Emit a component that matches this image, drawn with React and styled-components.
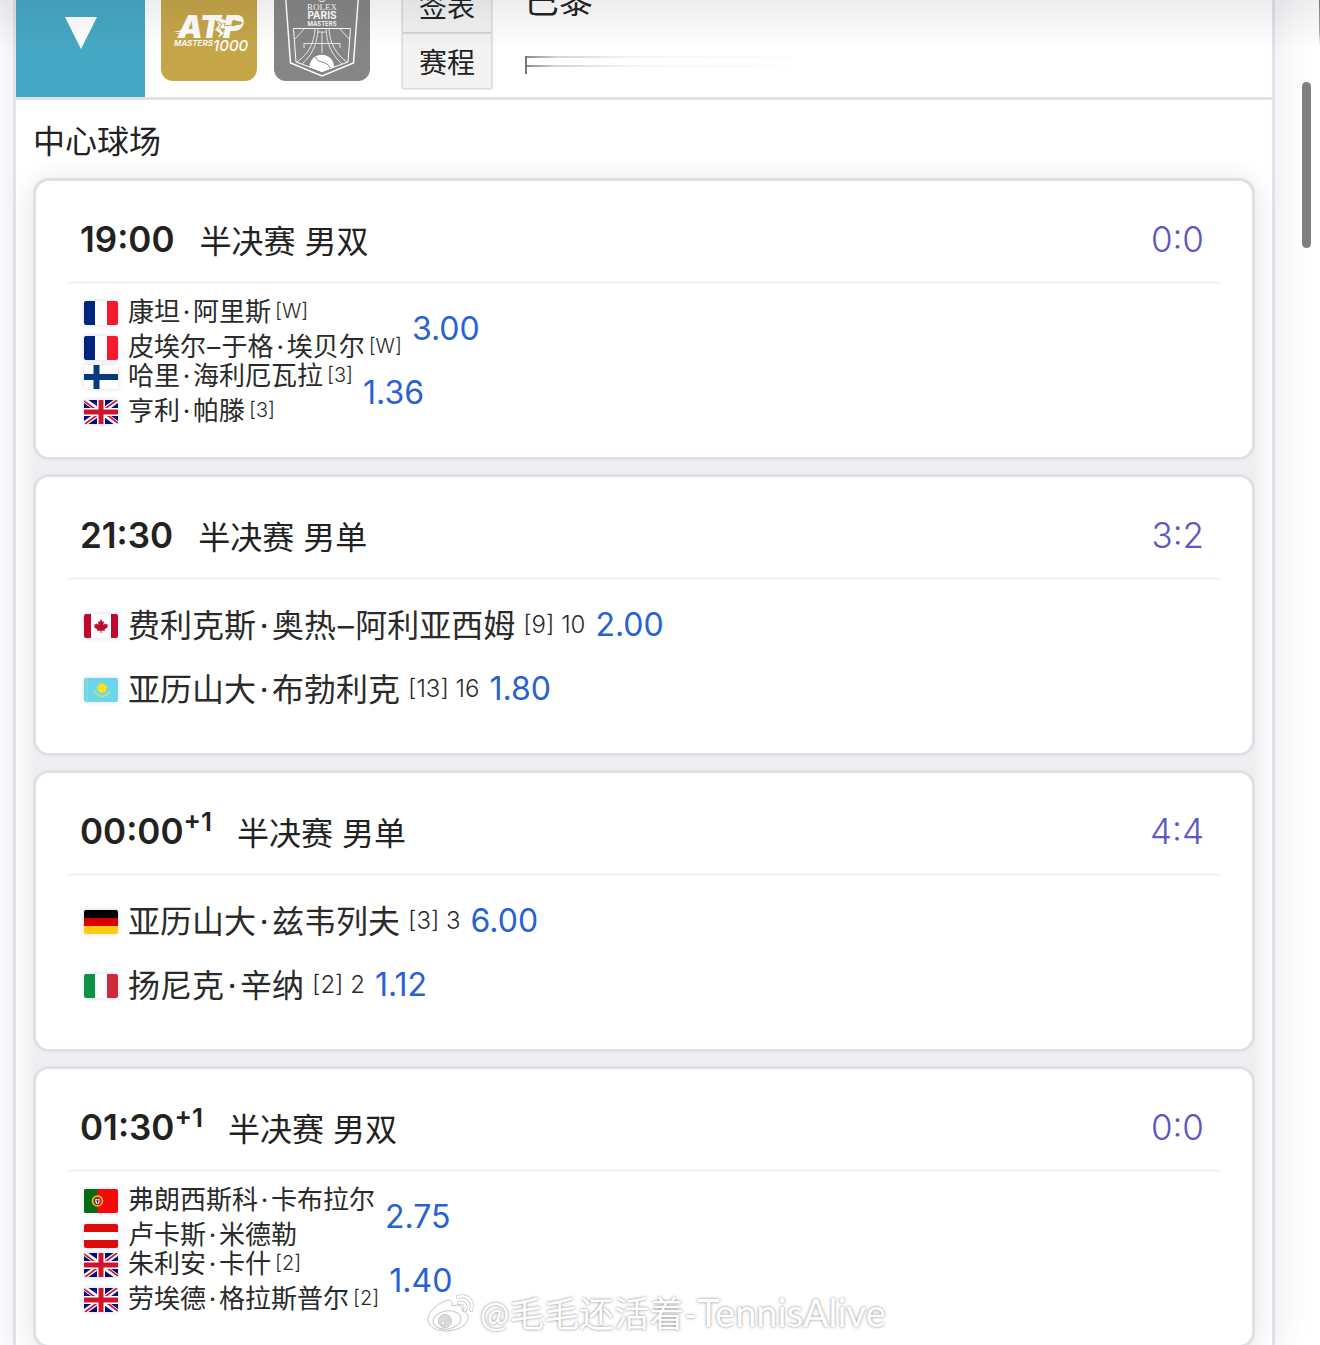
import React from "react";
import styled, { createGlobalStyle } from "styled-components";

const GlobalStyle = createGlobalStyle`
  * {
    box-sizing: border-box;
  }

  body {
    margin: 0;
    background: #fff;
    color: #222;
    font-family: Inter, "Noto Sans CJK SC", sans-serif;
  }

  button {
    font-family: inherit;
    color: inherit;
    border: 0;
    padding: 0;
  }
`;

const Page = styled.div`
  position: relative;
  height: 100vh;
  overflow: hidden;
`;

// the page is scrolled a little, so the event header starts above the window
const Scrolled = styled.main`
  margin: -31px 45px 0 13px;
  border: solid #dfe3ea;
  border-width: 0 3px;
  background: #fff;
  box-shadow: 0 0 36px rgba(60, 60, 110, 0.12);
`;

const EventHeader = styled.header`
  display: flex;
  align-items: center;
  border-bottom: 3px solid #dfe3e8;
`;

const Toggle = styled.button`
  display: flex;
  align-items: center;
  justify-content: center;
  width: 129px;
  height: 128px;
  background: #45a8c4;
`;

const Logos = styled.div`
  display: flex;
  gap: 17px;
  margin: 0 32px 0 16px;

  svg {
    display: block;
    border-radius: 12px;
  }
`;

const EventLinks = styled.nav`
  display: flex;
  flex-direction: column;
`;

const EventButton = styled.button`
  width: 90px;
  height: 56px;
  border: 1px solid #dadada;
  font-size: 28px;
  background: #f3f3f3;
  box-shadow: 0 0 2px #c4c4c4;
`;

const EventTitle = styled.div`
  margin-left: 33px;

  h1 {
    margin: 0;
    font-size: 34px;
    font-weight: 400;
    line-height: 64px;
  }
`;

const Surface = styled.div`
  display: flex;
  align-items: center;
  height: 64px;
`;

const Court = styled.h2`
  margin: 0;
  padding: 6px 17px 0;
  font-size: 32px;
  font-weight: 400;
  line-height: 72px;
`;

const MatchList = styled.div`
  display: flex;
  flex-direction: column;
  gap: 14px;
  margin: 0 17px;
  border-radius: 16px;
  background: #eeeef1;
  box-shadow: 0 4px 28px rgba(50, 50, 70, 0.14);
`;

const Card = styled.article`
  padding: 16px 32px 33px;
  border: 3px solid #dce1e8;
  border-radius: 16px;
  background: #fff;
`;

const CardHeader = styled.div`
  display: flex;
  align-items: center;
  height: 87px;
  padding: 0 16px 0 12px;
  margin-bottom: 12px;
  border-bottom: 3px solid #f4f4f5;
`;

const Time = styled.time`
  font-size: 35px;
  font-weight: 600;

  sup {
    font-size: 26px;
    line-height: 0;
    vertical-align: 13px;
  }
`;

const Round = styled.span`
  margin-left: 25px;
  font-size: 32px;
`;

const Score = styled.a`
  margin-left: auto;
  color: #5c56c6;
  font-size: 35px;
  font-weight: 300;
  text-decoration: none;
`;

const Side = styled.div`
  display: flex;
  align-items: center;
  gap: 10px;
  height: 64px;
  padding-left: 16px;
`;

const Player = styled.div`
  display: flex;
  align-items: center;
  height: ${props => (props.$small ? "35px" : "64px")};
  color: #2a2a2a;
  font-size: ${props => (props.$small ? "26px" : "32px")};
  white-space: nowrap;

  svg {
    flex: none;
    margin: 4px 10px 0 0;
    border-radius: 2px;
    box-shadow: 0 0 4px rgba(90, 100, 170, 0.25);
  }
`;

const Name = styled.span`
  padding-bottom: 3px;
`;

const Mark = styled.span`
  display: inline-block;
  width: ${props => (props.$dash ? "0.6em" : "0.5em")};
  text-align: center;
`;

const Seed = styled.span`
  margin-left: ${props => (props.$small ? "4px" : "8px")};
  font-size: ${props => (props.$small ? "20px" : "24px")};
  font-weight: 300;
`;

const Odds = styled.a`
  color: #2862d2;
  font-size: 32px;
  text-decoration: none;
`;

const TopShade = styled.div`
  position: absolute;
  inset: 0 0 auto;
  height: 50px;
  background: linear-gradient(rgba(30, 30, 50, 0.08), rgba(30, 30, 50, 0));
  pointer-events: none;
`;

const EdgeLine = styled.div`
  position: absolute;
  top: 0;
  right: 0;
  width: 1px;
  height: 46px;
  background: linear-gradient(#777, #aaa 70%, #fff);
`;

const ScrollThumb = styled.div`
  position: absolute;
  top: 82px;
  right: 9px;
  width: 9px;
  height: 166px;
  border-radius: 5px;
  background: #7f7f7f;
`;

const Watermark = styled.div`
  position: absolute;
  left: 427px;
  bottom: 10px;
  display: flex;
  align-items: center;
  gap: 5px;
  color: #fff;
  font-family: Lato, "Noto Sans CJK SC", sans-serif;
  font-size: 35px;
  line-height: 44px;
  text-shadow: 0 0 3px rgba(0, 0, 0, 0.5);
  white-space: nowrap;

  b {
    font-size: 38px;
    font-weight: 400;
  }
`;

function UnionJack() {
  return (
    <>
      <path fill="#00107a" d="M0 0h34v24H0z" />
      <path stroke="#fff" strokeWidth="5" d="M0 0l34 24M34 0L0 24" />
      <path stroke="#d0142c" strokeWidth="1.6" d="M0 1l15 11M34 23L19 12M33 0L18 11M1 24l15-11" />
      <path stroke="#fff" strokeWidth="8" d="M17 0v24M0 12h34" />
      <path stroke="#d0142c" strokeWidth="5" d="M17 0v24M0 12h34" />
    </>
  );
}

const flags = {
  fr: (
    <>
      <path fill="#00267f" d="M0 0h11v24H0z" />
      <path fill="#f5182f" d="M23 0h11v24H23z" />
    </>
  ),
  fi: <path stroke="#063a80" strokeWidth="6" d="M12.5 0v24M0 12h34" />,
  gb: <UnionJack />,
  ca: (
    <>
      <path fill="#c0082c" d="M0 0h7v24H0zM27 0h7v24h-7z" />
      <path
        fill="#c0082c"
        d="M17 5l1.5 3 1.5-.8-.6 3.8 2-1.8.5 1.2 2-.3-.8 2 1 .8-3.6 2.7.3 1.3-3.3-.4V19h-1v-2.5l-3.3.4.3-1.3-3.6-2.7 1-.8-.8-2 2 .3.5-1.2 2 1.8-.6-3.8 1.5.8z"
      />
    </>
  ),
  kz: (
    <>
      <path fill="#6bd5ee" d="M0 0h34v24H0z" />
      <path stroke="#a5e39a" strokeWidth="1.5" strokeDasharray="1.5 1" d="M3 1v22" />
      <circle cx="18" cy="10" r="4.5" fill="#ffe31a" />
      <circle cx="18" cy="10" r="5.8" fill="none" stroke="#c9e066" strokeDasharray="1 1" />
      <path fill="none" stroke="#bfe27a" strokeWidth="1.6" d="M10 13c1 4 5 4 8 6 3-2 7-2 8-6" />
    </>
  ),
  de: (
    <>
      <path fill="#000" d="M0 0h34v8H0z" />
      <path fill="#d80000" d="M0 8h34v8H0z" />
      <path fill="#ffcb0b" d="M0 16h34v8H0z" />
    </>
  ),
  it: (
    <>
      <path fill="#0d9246" d="M0 0h11v24H0z" />
      <path fill="#ce2b3a" d="M23 0h11v24H23z" />
    </>
  ),
  pt: (
    <>
      <path fill="#f50a0a" d="M0 0h34v24H0z" />
      <path fill="#0a6a12" d="M0 0h13.5v24H0z" />
      <circle cx="13.5" cy="12" r="5" fill="none" stroke="#e3c83a" strokeWidth="1.6" />
      <path fill="#f50a0a" d="M10.5 9h6v4a3 3 0 0 1-6 0z" />
      <path fill="#fff" d="M11.5 10h4v3a2 2 0 0 1-4 0z" />
      <path stroke="#23408e" d="M13.5 10.5v4M12 12h3" />
    </>
  ),
  at: (
    <>
      <path fill="#dc0a0a" d="M0 0h34v8H0z" />
      <path fill="#dc0a0a" d="M0 16h34v8H0z" />
    </>
  )
};

function Flag({ code }) {
  return (
    <svg width="34" height="24" viewBox="0 0 34 24" aria-hidden="true">
      <path fill="#fff" d="M0 0h34v24H0z" />
      {flags[code]}
    </svg>
  );
}

function AtpLogo() {
  return (
    <svg width="96" height="96" viewBox="0 0 96 96" fill="#fff" aria-label="ATP Masters 1000">
      <path fill="#c6a548" d="M0 0h96v96H0z" />
      <g fontFamily="Inter, sans-serif" fontStyle="italic">
        <text x="17" y="53" fontSize="31" fontWeight="900">AT</text>
        <text x="62" y="53" fontSize="31" fontWeight="900">P</text>
        <text x="13" y="61" fontSize="8" fontWeight="600">MASTERS</text>
        <text x="52" y="66" fontSize="15" fontWeight="500">1000</text>
      </g>
      <path d="M12 47l16-3-2 5H14l8-2zM52 31l12 3 5-2 6 1-5 4-8 1 3 4-6 3 4 3-6 5 2-5-5-3 4-5z" />
      <path fill="none" stroke="#c6a548" d="M56 36l5 3-3 4 6 2M63 41l7-1M54 47l5 2M60 33l5 2" />
      <ellipse cx="76" cy="38" rx="5" ry="2" fill="#c6a548" />
    </svg>
  );
}

function ParisLogo() {
  return (
    <svg width="96" height="96" viewBox="0 0 96 96" fill="none" stroke="#fff" aria-label="Rolex Paris Masters">
      <path fill="#858585" stroke="none" d="M0 0h96v96H0z" />
      <path strokeWidth="1.5" d="M11 4l5.500 74L48 91l31.500-13L85 4" />
      <path d="M19.500 43.500h57L74 77l-26 9.500L22 77z" />
      <path
        strokeWidth="0.8"
        d="M41 44c-1 15-7 25-18 33M44 44c-1 16-6 26-16 35M55 44c1 15 7 25 18 33M52 44c1 16 6 26 16 35M44 47h8M48 47v21M30 58.500h36M30 58v5M66 58v5M30 44l-9 10M66 44l9 10"
      />
      <path fill="#fff" stroke="none" d="M35.500 82a12.300 12.300 0 0 1 24.600 0L48 87z" />
      <path stroke="#858585" d="M42 72c1 7 11 3 14 11" />
      <ellipse cx="48" cy="15.5" rx="3" ry="1" />
      <g fill="#fff" stroke="none" textAnchor="middle">
        <text x="48" y="25" fontSize="9" fontFamily="Liberation Serif, serif">ROLEX</text>
        <text x="48" y="34" fontSize="10" fontWeight="700" fontFamily="Inter, sans-serif">PARIS</text>
        <text x="48" y="41" fontSize="6" fontWeight="600" fontFamily="Inter, sans-serif">MASTERS</text>
      </g>
    </svg>
  );
}

function FadedLine() {
  return (
    <svg width="303" height="20" viewBox="0 0 303 20" aria-hidden="true">
      <defs>
        <linearGradient id="fade">
          <stop offset="0" stopColor="#888" />
          <stop offset="0.1" stopColor="#d4d4d4" />
          <stop offset="0.35" stopColor="#f4f4f4" />
          <stop offset="1" stopColor="#fff" />
        </linearGradient>
      </defs>
      <path fill="url(#fade)" d="M1 1h300v2H1zM1 10h300v2H1z" />
      <path fill="#777" d="M0 1h2v18H0z" />
    </svg>
  );
}

function WeiboIcon() {
  return (
    <svg width="48" height="40" viewBox="0 0 48 40" fill="#fff" stroke="#c4c4c4" overflow="visible" aria-hidden="true">
      <path d="M18 8c4-2 8-1 7 5 6-2 11-1 10 5 5 1 7 4 6 8-2 7-11 12-22 12C9 38 1 34 1 26 1 19 10 11 18 8z" />
      <ellipse cx="20" cy="27" rx="14" ry="9" transform="rotate(-8 20 27)" />
      <circle cx="18" cy="28" r="6.5" fill="#dcdcdc" />
      <circle cx="16" cy="30" r="2" />
      <circle cx="21" cy="27" r="1" />
      <path strokeWidth="4" strokeLinecap="round" fill="none" d="M31 4c9-3 16 4 13 13M32 10c5-1 8 2 6 7" />
      <path
        fill="none"
        stroke="#fff"
        strokeWidth="2.5"
        strokeLinecap="round"
        d="M31 4c9-3 16 4 13 13M32 10c5-1 8 2 6 7"
      />
    </svg>
  );
}

const matches = [
  {
    time: "19:00",
    round: "半决赛 男双",
    score: "0:0",
    sides: [
      {
        odds: "3.00",
        players: [
          { flag: "fr", name: "康坦·阿里斯", seed: "[W]" },
          { flag: "fr", name: "皮埃尔–于格·埃贝尔", seed: "[W]" }
        ]
      },
      {
        odds: "1.36",
        players: [
          { flag: "fi", name: "哈里·海利厄瓦拉", seed: "[3]" },
          { flag: "gb", name: "亨利·帕滕", seed: "[3]" }
        ]
      }
    ]
  },
  {
    time: "21:30",
    round: "半决赛 男单",
    score: "3:2",
    sides: [
      { odds: "2.00", players: [{ flag: "ca", name: "费利克斯·奥热–阿利亚西姆", seed: "[9] 10" }] },
      { odds: "1.80", players: [{ flag: "kz", name: "亚历山大·布勃利克", seed: "[13] 16" }] }
    ]
  },
  {
    time: "00:00",
    nextDay: true,
    round: "半决赛 男单",
    score: "4:4",
    sides: [
      { odds: "6.00", players: [{ flag: "de", name: "亚历山大·兹韦列夫", seed: "[3] 3" }] },
      { odds: "1.12", players: [{ flag: "it", name: "扬尼克·辛纳", seed: "[2] 2" }] }
    ]
  },
  {
    time: "01:30",
    nextDay: true,
    round: "半决赛 男双",
    score: "0:0",
    sides: [
      {
        odds: "2.75",
        players: [
          { flag: "pt", name: "弗朗西斯科·卡布拉尔" },
          { flag: "at", name: "卢卡斯·米德勒" }
        ]
      },
      {
        odds: "1.40",
        players: [
          { flag: "gb", name: "朱利安·卡什", seed: "[2]" },
          { flag: "gb", name: "劳埃德·格拉斯普尔", seed: "[2]" }
        ]
      }
    ]
  }
];

function PlayerLine({ player, small }) {
  return (
    <Player $small={small}>
      <Flag code={player.flag} />
      <Name>
        {player.name.split(/([·–])/).map((part, i) =>
          part === "·" || part === "–" ? (
            <Mark key={i} $dash={part === "–"}>
              {part}
            </Mark>
          ) : (
            part
          )
        )}
      </Name>
      {player.seed && <Seed $small={small}>{player.seed}</Seed>}
    </Player>
  );
}

function Match({ match }) {
  return (
    <Card>
      <CardHeader>
        <Time>
          {match.time}
          {match.nextDay && <sup>+1</sup>}
        </Time>
        <Round>{match.round}</Round>
        <Score href="#score">{match.score}</Score>
      </CardHeader>
      {match.sides.map(side => (
        <Side key={side.odds}>
          <div>
            {side.players.map(player => (
              <PlayerLine key={player.name} player={player} small={side.players.length > 1} />
            ))}
          </div>
          <Odds href="#odds">{side.odds}</Odds>
        </Side>
      ))}
    </Card>
  );
}

function App() {
  return (
    <Page>
      <GlobalStyle />
      <Scrolled>
        <EventHeader>
          <Toggle aria-label="收起">
            <svg width="32" height="32" viewBox="0 0 32 32" fill="#fff">
              <path d="M0 0h32L16 32z" />
            </svg>
          </Toggle>
          <Logos>
            <AtpLogo />
            <ParisLogo />
          </Logos>
          <EventLinks>
            <EventButton>签表</EventButton>
            <EventButton>赛程</EventButton>
          </EventLinks>
          <EventTitle>
            <h1>巴黎</h1>
            <Surface>
              <FadedLine />
            </Surface>
          </EventTitle>
        </EventHeader>
        <Court>中心球场</Court>
        <MatchList>
          {matches.map(match => (
            <Match key={match.time} match={match} />
          ))}
        </MatchList>
      </Scrolled>
      <TopShade />
      <EdgeLine />
      <ScrollThumb />
      <Watermark>
        <WeiboIcon />
        <span>
          @毛毛还活着-<b>TennisAlive</b>
        </span>
      </Watermark>
    </Page>
  );
}

export default App;
